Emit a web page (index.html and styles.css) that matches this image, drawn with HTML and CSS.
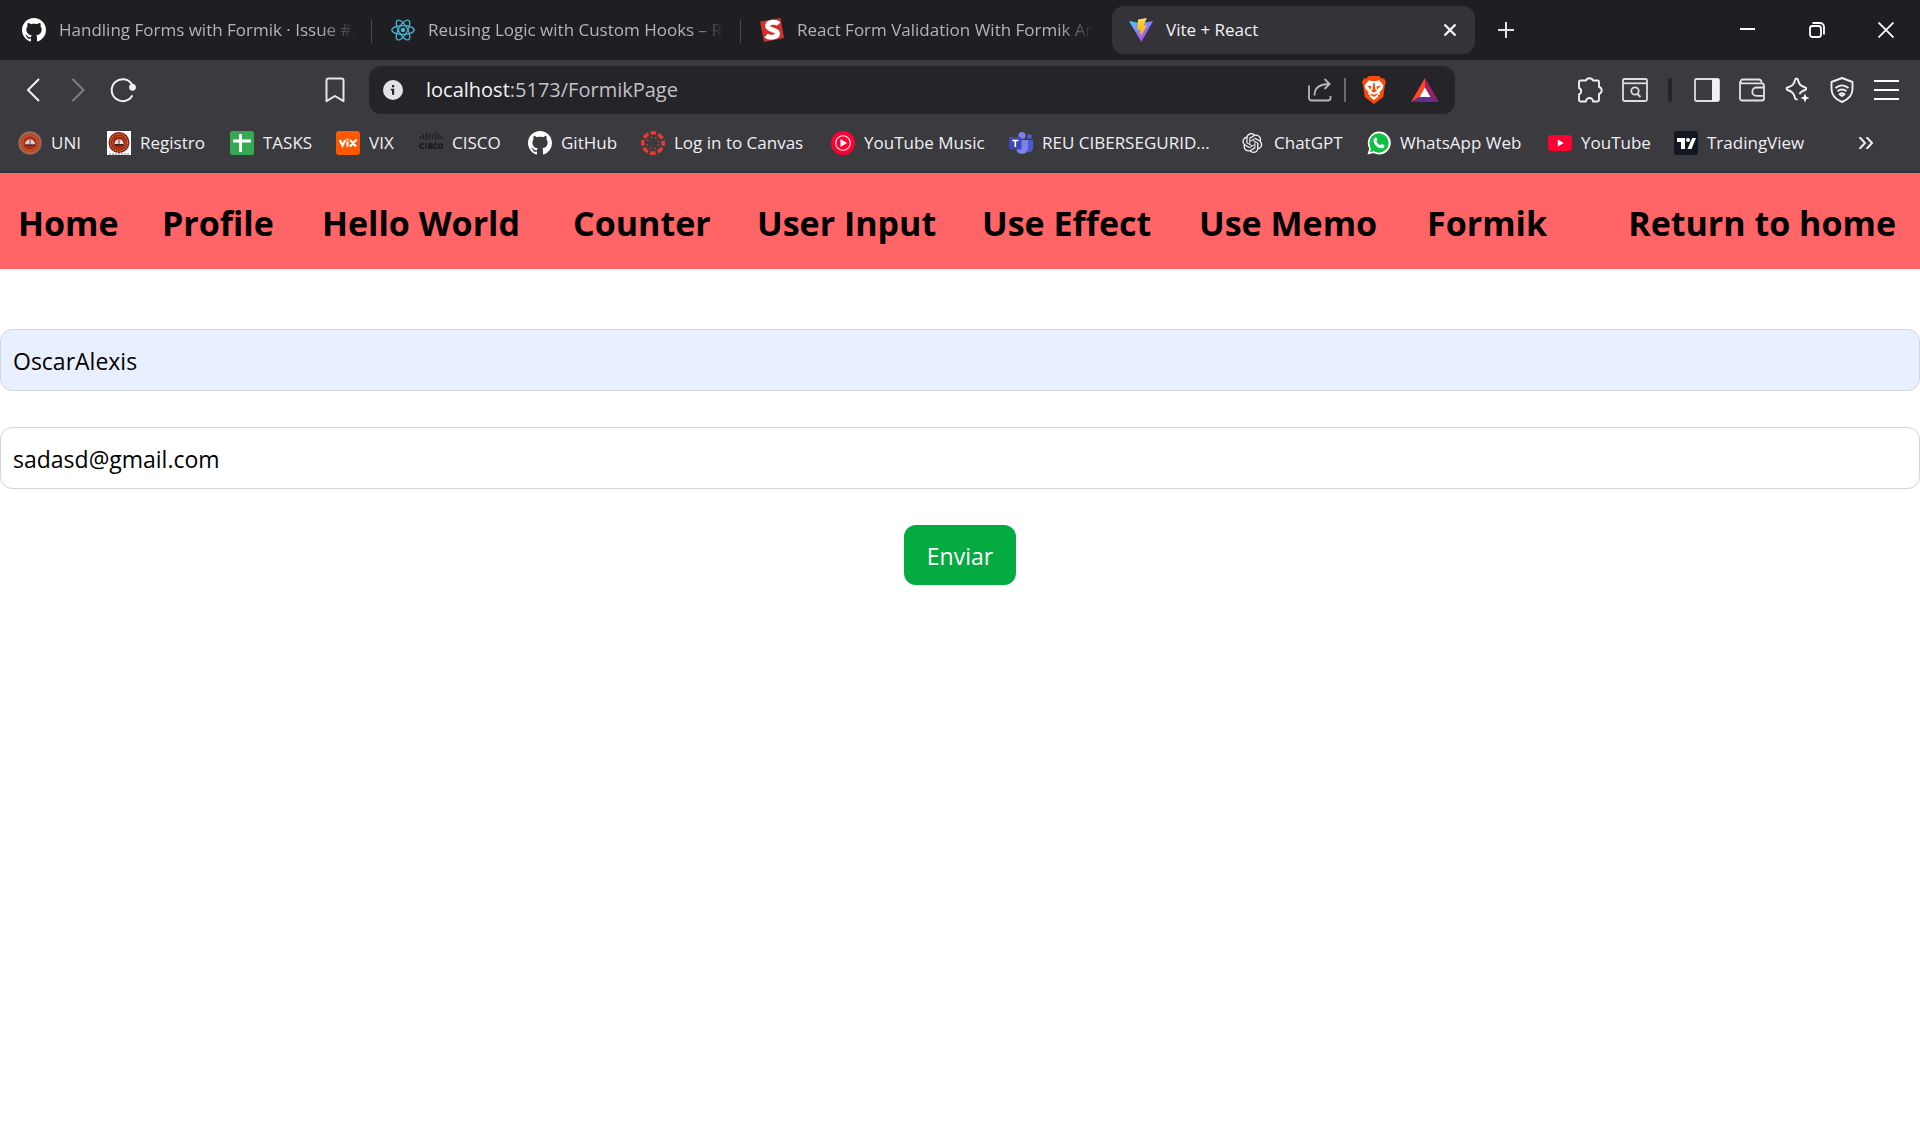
FILE: index.html
```html
<!DOCTYPE html>
<html lang="es">
<head>
<meta charset="utf-8">
<title>Vite + React</title>
<link rel="stylesheet" href="styles.css">
</head>
<body>
<svg class="defs" aria-hidden="true">
  <symbol id="github" viewBox="0 0 16 16"><path fill="#fff" d="M8 0C3.58 0 0 3.58 0 8c0 3.54 2.29 6.53 5.47 7.59.4.07.55-.17.55-.38 0-.19-.01-.82-.01-1.49-2.01.37-2.53-.49-2.69-.94-.09-.23-.48-.94-.82-1.13-.28-.15-.68-.52-.01-.53.63-.01 1.08.58 1.23.82.72 1.21 1.87.87 2.33.66.07-.52.28-.87.51-1.07-1.78-.2-3.64-.89-3.64-3.95 0-.87.31-1.59.82-2.15-.08-.2-.36-1.02.08-2.12 0 0 .67-.21 2.2.82.64-.18 1.32-.27 2-.27s1.36.09 2 .27c1.53-1.04 2.2-.82 2.2-.82.44 1.1.16 1.92.08 2.12.51.56.82 1.27.82 2.15 0 3.07-1.87 3.75-3.65 3.95.29.25.54.73.54 1.48 0 1.07-.01 1.93-.01 2.2 0 .21.15.46.55.38A8.01 8.01 0 0 0 16 8c0-4.42-3.58-8-8-8z"/></symbol>
</svg>

<header class="browser">
  <div class="tabstrip">
    <div class="tab"><svg class="fav"><use href="#github"/></svg><span class="tab-title faded">Handling Forms with Formik · Issue #2</span></div>
    <div class="tab"><svg class="fav" viewBox="0 0 24 24" fill="none" stroke="#4bb3cd" stroke-width="1.3"><circle cx="12" cy="12" r="2.2" fill="#4bb3cd" stroke="none"/><ellipse cx="12" cy="12" rx="11.2" ry="4.4"/><ellipse cx="12" cy="12" rx="11.2" ry="4.4" transform="rotate(60 12 12)"/><ellipse cx="12" cy="12" rx="11.2" ry="4.4" transform="rotate(120 12 12)"/></svg><span class="tab-title faded">Reusing Logic with Custom Hooks – R</span></div>
    <div class="tab"><svg class="fav" viewBox="0 0 24 24"><path d="M0 3.5 20.5 0 24 20 4 24z" fill="#d0322b"/><path d="M18.5 6.2C16.3 3.4 7.6 3.5 7.7 8c.1 4.4 9.6 3.4 9.8 7.4.1 4.4-8.4 4.800-11.500 2.200" fill="none" stroke="#fff" stroke-width="5"/></svg><span class="tab-title faded">React Form Validation With Formik An</span></div>
    <div class="tab active">
      <svg class="fav" viewBox="0 0 24 24"><defs><linearGradient id="va" x1="0" y1="0" x2=".7" y2="1"><stop offset="0" stop-color="#41d1ff"/><stop offset="1" stop-color="#bd34fe"/></linearGradient><linearGradient id="vb" x1="0" y1="0" x2="0" y2="1"><stop offset="0" stop-color="#ffea83"/><stop offset=".2" stop-color="#ffcf25"/><stop offset="1" stop-color="#ffa800"/></linearGradient></defs><path d="M0 3 12 5.200 24 3 12.400 24z" fill="url(#va)"/><path d="M17.800 0 9 1.600 8.300 12.200l3-.6-.9 4.200 2-.6-1.200 5 6.700-13.100-3.300.6z" fill="url(#vb)"/></svg>
      <span class="tab-title">Vite + React</span>
      <button class="tab-close" aria-label="Close tab"><svg width="14" height="14" viewBox="0 0 14 14" stroke="#f4f4f6" stroke-width="2.400"><path d="m1.500 1.500 11 11m0-11-11 11"/></svg></button>
    </div>
    <button class="new-tab" aria-label="New tab"><svg width="16" height="16" viewBox="0 0 16 16" stroke="#e4e4e8" stroke-width="2"><path d="M8 0v16M0 8h16"/></svg></button>
    <div class="window-controls">
      <button aria-label="Minimize"><svg width="16" height="16" viewBox="0 0 16 16" stroke="#fff" stroke-width="2"><path d="M0 7h15"/></svg></button>
      <button aria-label="Restore"><svg width="16" height="16" viewBox="0 0 16 16" fill="none" stroke="#fff" stroke-width="1.800"><rect x="1" y="4" width="11" height="11" rx="2.500"/><path d="M3.500 1H11a4 4 0 0 1 4 4v7.500"/></svg></button>
      <button aria-label="Close"><svg width="16" height="16" viewBox="0 0 16 16" stroke="#fff" stroke-width="1.800"><path d="m.5.5 15 15m0-15-15 15"/></svg></button>
    </div>
  </div>

  <div class="toolbar">
    <button class="tool" aria-label="Back"><svg width="26" height="26" viewBox="0 0 26 26" fill="none" stroke="#f2f2f5" stroke-width="2" stroke-linecap="round"><path d="M18.500 2.500 8 13l10.500 10.500"/></svg></button>
    <button class="tool" aria-label="Forward"><svg width="26" height="26" viewBox="0 0 26 26" fill="none" stroke="#7f7e84" stroke-width="2" stroke-linecap="round"><path d="M8 2.500 18.500 13 8 23.500"/></svg></button>
    <button class="tool" aria-label="Reload"><svg width="26" height="26" viewBox="0 0 26 26" fill="none" stroke="#f2f2f5" stroke-width="2" stroke-linecap="round"><path d="M21.800 7A11 11 0 1 0 22 19"/><circle cx="22.500" cy="10.300" r="2.400" fill="#f2f2f5"/></svg></button>
    <button class="tool save" aria-label="Bookmark this page"><svg width="26" height="26" viewBox="0 0 26 26" fill="none" stroke="#e6e5ea" stroke-width="2" stroke-linejoin="round"><path d="M4.500 3.500a2 2 0 0 1 2-2h13a2 2 0 0 1 2 2v20.700L13 19l-8.500 5.200z"/></svg></button>
    <div class="address">
      <svg width="20" height="20" viewBox="0 0 20 20"><circle cx="10" cy="10" r="10" fill="#e3e2e8"/><path d="M9 5h2.200v2.200H9zM7.800 8.800h3.400v6H9v-4.300H7.800z" fill="#252428"/></svg>
      <div class="url"><b>localhost</b>:5173/FormikPage</div>
      <button class="share" aria-label="Share"><svg width="24" height="24" viewBox="0 0 24 24" fill="none" stroke="#b6b5bb" stroke-width="1.800"><path d="M1 7.500V20a2.500 2.500 0 0 0 2.500 2.500H20a2.500 2.500 0 0 0 2.500-2.500v-2M6.500 17.500C6.500 10.500 11 6 21.500 6M16.500 1l5.200 5-5.200 5"/></svg></button>
      <span class="address-sep"></span>
      <button class="shields" aria-label="Brave Shields"><svg width="24" height="28" viewBox="0 0 24 28"><path d="m7 0h10l2.800 2.600 2.200-.3L24 6l-1 3-1.800 12L12 28l-9.200-7L1 9 0 6l2-3.700 2.200.3z" fill="#fb4a0a"/><path d="m6.800 4.200 3 .8h4.400l3-.8 4.300 5.200-1 3.400-3 3.400.5 2-2.400 1.100.8 1.200-4.400 3.500-4.400-3.500.8-1.200L6 18.200l.5-2-3-3.400-1-3.400z" fill="#fff"/><path d="m5 9.500 4.600 1-1 3zM19 9.500l-4.600 1 1 3zM11.300 7h1.400l.6 6.500 1.700 1-3 2.200-3-2.200 1.700-1zM8 17.500l4 1.300 4-1.300-2.500 3h-3z" fill="#fb4a0a"/></svg></button>
      <button class="rewards" aria-label="Brave Rewards"><svg width="28" height="24" viewBox="0 0 28 24"><path d="M14 0v9.500L8.500 19 0 24z" fill="#ff4724"/><path d="M14 0v9.500l5.500 9.500 8.500 5z" fill="#9e1f63"/><path d="m0 24 8.500-5h11l8.500 5z" fill="#662d91"/><path d="m14 9.500 5.500 9.500h-11z" fill="#fff"/></svg></button>
    </div>
    <div class="extensions">
      <button class="tool" aria-label="Extensions"><svg width="26" height="26" viewBox="0 0 26 26" fill="none" stroke="#efeef3" stroke-width="1.900" stroke-linejoin="round"><path d="M3.500 3.500H9a3.600 3 0 0 1 7 0h4.500A1.500 1.500 0 0 1 22 5v5a3.500 3.500 0 0 1 0 6.800v6.200a1.500 1.500 0 0 1-1.500 1.500H16a3.500 3.500 0 0 0-7 0H3.500A1.500 1.500 0 0 1 2 23v-5.500a3.500 3.500 0 0 0 0-6.500V5A1.500 1.500 0 0 1 3.500 3.500z"/></svg></button>
      <button class="tool" aria-label="Search tabs"><svg width="26" height="26" viewBox="0 0 26 26" fill="none" stroke="#dddce2" stroke-width="1.800"><rect x="1" y="2" width="24" height="22" rx="1.500"/><path d="M1 6.300h24"/><circle cx="13" cy="14" r="3.700"/><path d="m15.500 17 3 3"/></svg></button>
      <span class="tool-sep"></span>
      <button class="tool" aria-label="Sidebar"><svg width="26" height="26" viewBox="0 0 26 26"><rect x="1" y="2" width="24" height="22" rx="1.500" fill="none" stroke="#dddce2" stroke-width="1.800"/><path d="M18 2h7v22h-7z" fill="#f1f0f5"/></svg></button>
      <button class="tool" aria-label="Wallet"><svg width="26" height="26" viewBox="0 0 26 26" fill="none" stroke="#e2e1e6" stroke-width="1.800" stroke-linejoin="round"><path d="M22.500 6V5a2.500 2.500 0 0 0-2.500-2.500H3a2 2 0 0 0 0 3.800h19.500a2.500 2.500 0 0 1 2.500 2.500V21.500A2 2 0 0 1 23 23.500H3a2 2 0 0 1-2-2V4.500M25 10.500h-7.500a4.200 4.200 0 0 0 0 8.400H25"/></svg></button>
      <button class="tool" aria-label="Leo AI"><svg width="26" height="26" viewBox="0 0 26 26" fill="none" stroke="#efeef3" stroke-width="1.900" stroke-linejoin="round"><path d="M12.500 1.500c.8 0 1.200.5 1.400 1.300 1 4.600 2.500 6.100 7.300 7.700 1.300.5 1.300 2 0 2.500-3.200 1-4.700 2-5.700 4.200M12.500 1.500c-.8 0-1.200.5-1.400 1.300-1 4.600-2.800 6.200-7.600 7.700-1.300.5-1.300 2 0 2.500 4.800 1.500 6.400 3.200 7.600 8.200.4 1.300 1.500 1.600 2.400.6"/><path d="M21 16.500l1.300 3.200 3.200 1.300-3.200 1.300L21 25.500l-1.300-3.200-3.200-1.300 3.200-1.300z" fill="#fff" stroke="none"/></svg></button>
      <button class="tool" aria-label="VPN"><svg width="26" height="26" viewBox="0 0 26 26" fill="none" stroke="#efeef3" stroke-width="1.900" stroke-linejoin="round"><path d="M13 1 2.500 5v7c0 6.500 4.500 10.500 10.500 13 6-2.500 10.500-6.500 10.500-13V5z"/><path d="M6.500 11c4-3.500 9-3.500 13 0M8.500 14.200c3-2.200 6-2.200 9 0M10.500 17.200c1.700-1.200 3.300-1.200 5 0L13 19z"/></svg></button>
      <button class="tool" aria-label="Menu"><svg width="26" height="26" viewBox="0 0 26 26" stroke="#fff" stroke-width="2"><path d="M0 4h25M0 13h25M0 22h25"/></svg></button>
    </div>
  </div>

  <nav class="bookmarks" aria-label="Bookmarks">
    <a href="#"><svg class="fav" viewBox="0 0 24 24"><circle cx="12" cy="12" r="11" fill="#c65a2b" stroke="#8b6a66" stroke-width="1.500"/><circle cx="12" cy="12" r="8.500" fill="none" stroke="#a63a20" stroke-width="1.500" stroke-dasharray="1.500 1"/><circle cx="12" cy="12" r="6.800" fill="#a52f1e"/><path d="M7 13.500c0-3 2-5 5-5s5 2 5 5z" fill="#d8d2cc"/><path d="M7 13.500h10v1.500H7zM11.600 9h.8v5h-.8z" fill="#4b3431"/></svg>UNI</a>
    <a href="#"><svg class="fav" viewBox="0 0 24 24"><path fill="#fff" d="M0 0h24v24H0z"/><circle cx="12" cy="11.500" r="10.500" fill="#8e1a15"/><circle cx="12" cy="11.500" r="8.500" fill="none" stroke="#d08a35" stroke-width="1.200" stroke-dasharray="1.600 .7"/><circle cx="12" cy="11.500" r="6.500" fill="#a5231b" stroke="#c8742f" stroke-width=".7"/><path d="M7.500 13c0-3 2-4.800 4.500-4.800s4.500 1.800 4.500 4.800z" fill="#e5e0da"/><path d="M7.500 13h9v1.500h-9zM11.600 8.500h.8v5h-.8z" fill="#3a2220"/><path d="M2 23h20" stroke="#777" stroke-dasharray="2 1"/></svg>Registro</a>
    <a href="#"><svg class="fav" viewBox="0 0 24 24"><rect width="24" height="24" rx="2.500" fill="#34a853"/><path d="M10.500 3v18M3 10h18" stroke="#fff" stroke-width="3"/></svg>TASKS</a>
    <a href="#"><svg class="fav" viewBox="0 0 24 24"><rect width="24" height="24" rx="3" fill="#ff5900"/><g fill="none" stroke="#fff" stroke-width="2.200"><path d="m3.800 9 2.700 5.500L9.200 9M11.500 10.500V15.500M14 9l6 6.500M20.500 8.500 14 15.500"/></g><circle cx="11.500" cy="8.600" r="1.100" fill="#fff"/></svg>VIX</a>
    <a href="#"><svg class="fav" viewBox="0 0 24 24" fill="none" stroke="#1f1e22" stroke-width="1.400"><path d="M1.500 5v3M4.500 3v5M7.500 1.500V9M10.500 3v5M13.500 3v5M16.500 1.500V9M19.500 3v5M22.500 5v3"/><path stroke-width="1.800" d="M4.800 13H2.500C.5 13 .5 17 2.500 17h2.300M7 12v6M13 13h-3v2h2.500v2H9M18 13h-2c-2 0-2 4 0 4h2"/><circle cx="21.300" cy="15" r="2" stroke-width="1.800"/></svg>CISCO</a>
    <a href="#"><svg class="fav"><use href="#github"/></svg>GitHub</a>
    <a href="#"><svg class="fav" viewBox="0 0 24 24"><circle cx="12" cy="12" r="10.200" fill="none" stroke="#e63b2e" stroke-width="3.600" stroke-dasharray="5.800 2.211" stroke-dashoffset="2.900"/><circle cx="12" cy="12" r="5.800" fill="none" stroke="#e63b2e" stroke-width="1.600" stroke-dasharray="1.500 3.055" stroke-dashoffset="-1.500"/></svg>Log in to Canvas</a>
    <a href="#"><svg class="fav" viewBox="0 0 24 24"><circle cx="12" cy="12" r="12" fill="#ff0033"/><circle cx="12" cy="12" r="7.300" fill="none" stroke="#fff" stroke-width="1.100"/><path d="m9.500 8 6.500 4-6.500 4z" fill="#fff"/></svg>YouTube Music</a>
    <a href="#"><svg class="fav" viewBox="0 0 24 24"><circle cx="20.500" cy="5.500" r="2.500" fill="#5059c9"/><path d="M16 9h8v7a4 4 0 0 1-8 2z" fill="#5059c9"/><circle cx="13" cy="4.500" r="3.600" fill="#7b83eb"/><path d="M7 9h12v8a6 6 0 0 1-12 0z" fill="#7b83eb"/><rect y="6" width="12.500" height="12.500" rx="1" fill="#4048b8"/><path d="M3.200 9.500h6.200M6.300 9.500v6.500" stroke="#fff" stroke-width="1.600"/></svg>REU CIBERSEGURID...</a>
    <a href="#"><svg class="fav" viewBox="-1.600 -2.400 28.800 28.800"><path fill="#f2f2f4" d="M22.2819 9.8211a5.9847 5.9847 0 0 0-.5157-4.9108 6.0462 6.0462 0 0 0-6.5098-2.9A6.0651 6.0651 0 0 0 4.9807 4.1818a5.9847 5.9847 0 0 0-3.9977 2.9 6.0462 6.0462 0 0 0 .7427 7.0966 5.98 5.98 0 0 0 .511 4.9107 6.051 6.051 0 0 0 6.5146 2.9001A5.9847 5.9847 0 0 0 13.2599 24a6.0557 6.0557 0 0 0 5.7718-4.2058 5.9894 5.9894 0 0 0 3.9977-2.9001 6.0557 6.0557 0 0 0-.7475-7.0729zm-9.022 12.6081a4.4755 4.4755 0 0 1-2.8764-1.0408l.1419-.0804 4.7783-2.7582a.7948.7948 0 0 0 .3927-.6813v-6.7369l2.02 1.1686a.071.071 0 0 1 .038.052v5.5826a4.504 4.504 0 0 1-4.4945 4.4944zm-9.6607-4.1254a4.4708 4.4708 0 0 1-.5346-3.0137l.142.0852 4.783 2.7582a.7712.7712 0 0 0 .7806 0l5.8428-3.3685v2.3324a.0804.0804 0 0 1-.0332.0615L9.74 19.9502a4.4992 4.4992 0 0 1-6.1408-1.6464zM2.3408 7.8956a4.485 4.485 0 0 1 2.3655-1.9728V11.6a.7664.7664 0 0 0 .3879.6765l5.8144 3.3543-2.0201 1.1685a.0757.0757 0 0 1-.071 0l-4.8303-2.7865A4.504 4.504 0 0 1 2.3408 7.872zm16.5963 3.8558L13.1038 8.364 15.1192 7.2a.0757.0757 0 0 1 .071 0l4.8303 2.7913a4.4944 4.4944 0 0 1-.6765 8.1042v-5.6772a.79.79 0 0 0-.407-.667zm2.0107-3.0231l-.142-.0852-4.7735-2.7818a.7759.7759 0 0 0-.7854 0L9.409 9.2297V6.8974a.0662.0662 0 0 1 .0284-.0615l4.8303-2.7866a4.4992 4.4992 0 0 1 6.6802 4.66zM8.3065 12.863l-2.02-1.1638a.0804.0804 0 0 1-.038-.0567V6.0742a4.4992 4.4992 0 0 1 7.3757-3.4537l-.142.0805L8.704 5.459a.7948.7948 0 0 0-.3927.6813zm1.0976-2.3654l2.602-1.4998 2.6069 1.4998v2.9994l-2.5974 1.4997-2.6067-1.4997Z"/></svg>ChatGPT</a>
    <a href="#"><svg class="fav" viewBox="0 0 24 24"><path d="M.5 23.500 2.200 17.500A11.500 11.500 0 1 1 6.500 21.900z" fill="#fff"/><circle cx="12" cy="12" r="9.700" fill="#0fc143"/><path d="M3 21l1.200-4.500 3.300 3.400z" fill="#0fc143"/><path d="M8.200 6.500c.7-.3 1.200 0 1.400.6l.7 1.600c.2.700-.6 1.300-.9 1.700.9 1.900 2.200 3 4.100 3.900.5-.5 1-1.500 1.600-1.300l2 1c.8.500.3 2.100-.5 2.700-2.500 1.700-6.200-.4-8.100-2.500C6.800 12.200 5.200 8.700 8.200 6.500z" fill="#fff"/></svg>WhatsApp Web</a>
    <a href="#"><svg class="fav" viewBox="0 0 24 24"><rect y="4" width="24" height="16" rx="3.500" fill="#ff0033"/><path d="m9.800 8.500 6 3.500-6 3.500z" fill="#fff"/></svg>YouTube</a>
    <a href="#"><svg class="fav" viewBox="0 0 24 24"><rect width="24" height="24" rx="3" fill="#131722"/><path d="M3 7h8v11H7v-7H3zM18.200 7H22l-4.500 11h-4z" fill="#fff"/><circle cx="14" cy="9" r="2" fill="#fff"/></svg>TradingView</a>
    <button class="overflow" aria-label="More bookmarks"><svg width="16" height="12" viewBox="0 0 16 12" fill="none" stroke="#f0eff4" stroke-width="2"><path d="m1.500 0 5.500 6-5.500 6M8.500 0 14 6l-5.500 6"/></svg></button>
  </nav>
</header>

<nav class="site-nav">
  <a href="#">Home</a>
  <a href="#">Profile</a>
  <a href="#">Hello World</a>
  <a href="#">Counter</a>
  <a href="#">User Input</a>
  <a href="#">Use Effect</a>
  <a href="#">Use Memo</a>
  <a href="#">Formik</a>
  <a class="return" href="#">Return to home</a>
</nav>

<main>
  <form class="form">
    <input class="field autofilled" type="text" name="name" aria-label="Nombre" value="OscarAlexis">
    <input class="field" type="email" name="email" aria-label="Email" value="sadasd@gmail.com">
    <button class="submit" type="button">Enviar</button>
  </form>
</main>
</body>
</html>
```
FILE: styles.css
```css
* { box-sizing: border-box; }

body {
  margin: 0;
  background: #fff;
  color: #000;
  font-family: "Segoe UI", "Open Sans", "Noto Sans", sans-serif;
}

a { color: inherit; text-decoration: none; }

button {
  display: flex;
  align-items: center;
  justify-content: center;
  padding: 0;
  border: 0;
  background: none;
  font: inherit;
}

svg { display: block; flex: none; }
.defs { position: absolute; width: 0; height: 0; }
.fav { width: 24px; height: 24px; }

/* Browser chrome */
.browser {
  background: #3b3a3e;
  border-bottom: 2px solid #333236;
  font-size: 17px;
  line-height: 24px;
}

.tabstrip {
  display: flex;
  align-items: center;
  gap: 6px;
  height: 60px;
  padding-left: 5px;
  background: #1f1e23;
}

.tab {
  position: relative;
  display: flex;
  flex: 0 1 363px;
  align-items: center;
  gap: 13px;
  min-width: 0;
  height: 48px;
  padding: 0 8px 0 17px;
  border-radius: 12px;
  color: #b4b3b8;
}

.tab:nth-child(-n+2)::after {
  content: "";
  position: absolute;
  top: 13px;
  right: -4px;
  width: 1px;
  height: 24px;
  background: #46454a;
}

.tab-title {
  flex: 1;
  overflow: hidden;
  white-space: nowrap;
}

.faded {
  -webkit-mask-image: linear-gradient(to right, #000 calc(100% - 40px), transparent calc(100% - 4px));
  mask-image: linear-gradient(to right, #000 calc(100% - 40px), transparent calc(100% - 4px));
}

.tab.active {
  padding-right: 18px;
  background: #343338;
  color: #f4f4f6;
}

.new-tab { width: 50px; height: 48px; }

.window-controls { display: flex; margin-left: auto; }
.window-controls button { width: 69px; height: 58px; }

.toolbar {
  display: flex;
  align-items: center;
  height: 60px;
  padding: 0 11px 0 10px;
}

.tool { width: 45px; height: 48px; }
.save { margin-left: 167px; }

.address {
  display: flex;
  flex: 0 1 1086px;
  align-items: center;
  height: 48px;
  margin-left: 12px;
  padding: 0 16px 0 14px;
  border-radius: 12px;
  background: #252428;
  color: #c3c2c8;
  font-size: 20px;
}

.url { flex: 1; margin-left: 23px; }
.url b { color: #f4f4f6; font-weight: 400; }

.address-sep {
  width: 2px;
  height: 24px;
  margin: 0 16px 0 12px;
  background: #6b6a70;
}

.rewards { margin-left: 25px; }

.extensions {
  display: flex;
  align-items: center;
  margin-left: auto;
}

.tool-sep {
  width: 4px;
  height: 24px;
  margin: 0 12px 0 11px;
  border-radius: 2px;
  background: #252428;
}

.bookmarks {
  display: grid;
  grid-template-columns: 89px 123px 106px 83px 109px 113px 190px 178px 232px 126px 181px 126px 178px auto;
  align-items: center;
  height: 51px;
  padding: 0 0 5px 18px;
  color: #f0eff4;
  white-space: nowrap;
}

.bookmarks a { display: flex; align-items: center; gap: 9px; }
.overflow { justify-self: start; margin-left: 6px; }

/* Page */
.site-nav {
  display: grid;
  grid-template-columns: 144px 160px 251px 184px 225px 217px 228px auto 1fr;
  align-items: center;
  height: 96px;
  padding: 3px 24px 0 18px;
  background: #ff6467;
  font-size: 34px;
  font-weight: 700;
  line-height: 48px;
  white-space: nowrap;
}

.return { justify-self: end; }

.form {
  display: flex;
  flex-direction: column;
  align-items: center;
  gap: 36px;
  padding-top: 60px;
}

.field {
  width: 100%;
  height: 62px;
  padding: 2px 12px 0;
  border: 1px solid #d1d5dc;
  border-radius: 12px;
  background: #fff;
  color: #000;
  font: inherit;
  font-size: 23px;
}

.autofilled { background: #e8f0fe; }

.submit {
  height: 60px;
  padding: 2px 23px 0;
  border-radius: 12px;
  background: #03ab41;
  color: #fff;
  font-size: 23px;
}
```
